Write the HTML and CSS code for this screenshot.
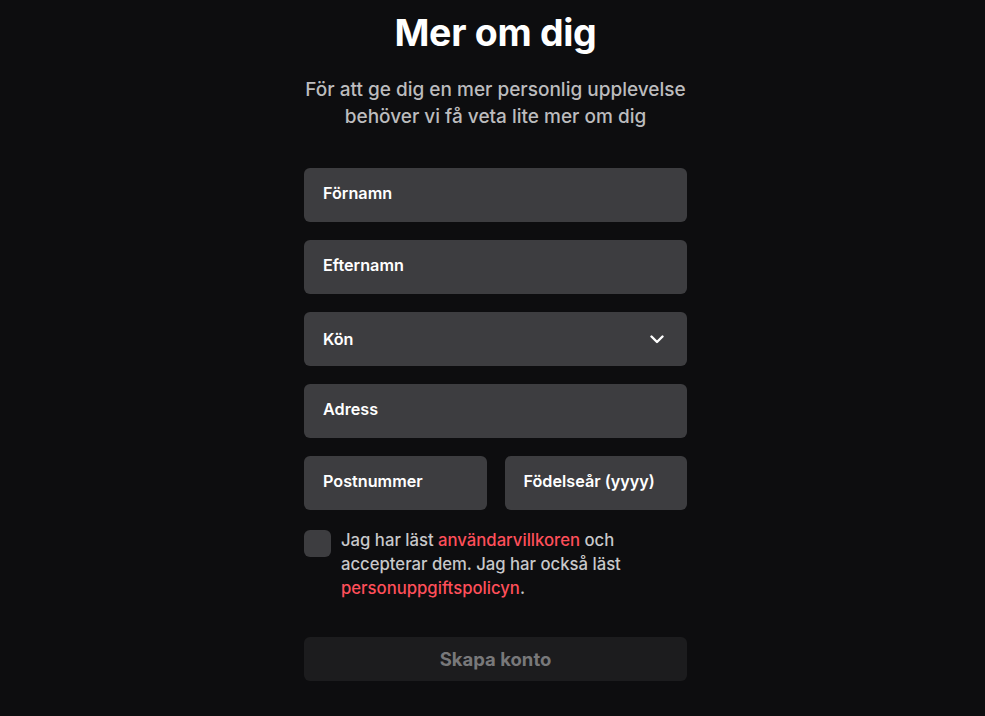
FILE: index.html
```html
<!DOCTYPE html>
<html lang="sv">
<head>
<meta charset="utf-8">
<title>Mer om dig</title>
<link rel="stylesheet" href="styles.css">
</head>
<body>
<main class="page">
  <h1 class="title">Mer om dig</h1>
  <p class="lead">För att ge dig en mer personlig upplevelse behöver vi få veta lite mer om dig</p>
  <form class="form">
    <div class="field"><span class="ph">Förnamn</span></div>
    <div class="field"><span class="ph">Efternamn</span></div>
    <div class="field select"><span class="ph">Kön</span>
      <svg class="chev" width="14" height="9" viewBox="0 0 14 9"><path d="M1.5 1.5 L7 7 L12.5 1.5" fill="none" stroke="#fff" stroke-width="2.4" stroke-linecap="round" stroke-linejoin="round"/></svg>
    </div>
    <div class="field"><span class="ph">Adress</span></div>
    <div class="row">
      <div class="field"><span class="ph">Postnummer</span></div>
      <div class="field"><span class="ph">Födelseår (yyyy)</span></div>
    </div>
    <div class="consent">
      <span class="box"></span>
      <p class="terms">Jag har läst <a href="#">användarvillkoren</a> och accepterar dem. Jag har också läst <a href="#">personuppgiftspolicyn</a>.</p>
    </div>
    <button type="button" class="submit">Skapa konto</button>
  </form>
</main>
</body>
</html>
```
FILE: styles.css
```css
html, body {
  margin: 0;
  padding: 0;
  background: #0d0d0f;
}
body {
  font-family: "Inter", "Noto Sans", sans-serif;
  color: #fff;
  padding-left: 6px;
}
.page {
  width: 383px;
  margin: 0 auto;
  padding-top: 8px;
  display: flex;
  flex-direction: column;
  align-items: stretch;
}
.title {
  margin: 0;
  text-align: center;
  font-size: 37.5px;
  font-weight: 700;
  line-height: 50px;
  letter-spacing: -0.3px;
  color: #fff;
}
.lead {
  margin: 18px -8px 0;
  text-align: center;
  font-size: 19px;
  line-height: 27px;
  color: #bcbcbe;
  font-weight: 500;
}
.form {
  margin-top: 38px;
  display: flex;
  flex-direction: column;
  gap: 18px;
}
.field {
  height: 54px;
  box-sizing: border-box;
  background: #3d3d40;
  border-radius: 6px;
  padding: 0 19px;
  display: flex;
  align-items: center;
}
.ph {
  font-size: 16.2px;
  font-weight: 600;
  color: #fff;
  margin-top: -4px;
}
.select {
  justify-content: space-between;
  padding-right: 23px;
}
.select .ph {
  margin-top: 0;
}
.chev { display: block; }
.row {
  display: grid;
  grid-template-columns: 1fr 1fr;
  gap: 18px;
}
.consent {
  display: flex;
  gap: 10px;
  margin-top: 0;
}
.box {
  flex: none;
  width: 27px;
  height: 27px;
  border-radius: 6px;
  background: #3d3d40;
  margin-top: 2px;
}
.terms {
  margin: 0;
  font-size: 16.7px;
  line-height: 24px;
  font-weight: 500;
  color: #c8c8ca;
}
.terms a {
  color: #ff4f5a;
  text-decoration: none;
}
.submit {
  margin-top: 19px;
  height: 44px;
  border: none;
  border-radius: 6px;
  background: #1c1c1e;
  color: #78787a;
  font-family: inherit;
  font-size: 18.5px;
  font-weight: 700;
}
```
